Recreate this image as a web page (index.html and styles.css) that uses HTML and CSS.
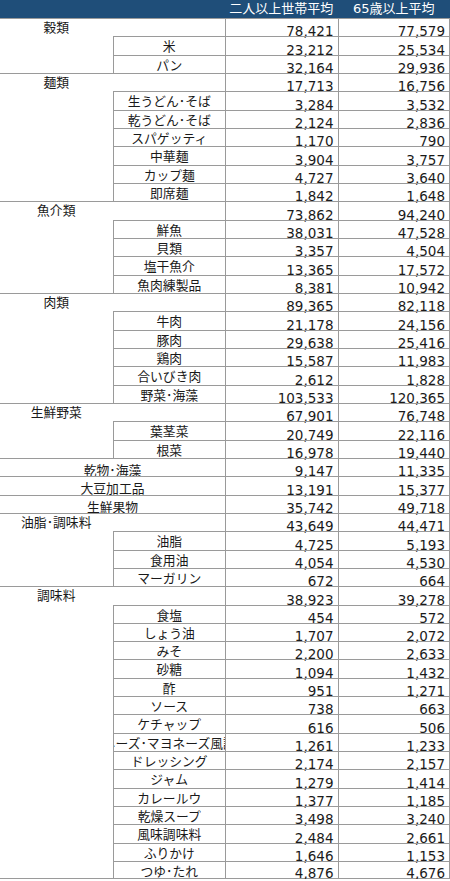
FILE: index.html
```html
<!DOCTYPE html>
<html lang="ja">
<head>
<meta charset="utf-8">
<title>食料支出</title>
<link rel="stylesheet" href="styles.css">
</head>
<body>
<div class="sheet">
  <div class="hd"></div><div class="hd"></div><div class="hd htxt">二人以上世帯平均</div><div class="hd htxt">65歳以上平均</div>

  <div class="cat">穀類</div><div class="catb"></div><div class="num">78,421</div><div class="num r">77,579</div>
  <div class="emp"></div><div class="sub">米</div><div class="num">23,212</div><div class="num r">25,534</div>
  <div class="emp"></div><div class="sub">パン</div><div class="num">32,164</div><div class="num r">29,936</div>

  <div class="cat">麺類</div><div class="catb"></div><div class="num">17,713</div><div class="num r">16,756</div>
  <div class="emp"></div><div class="sub">生うどん･そば</div><div class="num">3,284</div><div class="num r">3,532</div>
  <div class="emp"></div><div class="sub">乾うどん･そば</div><div class="num">2,124</div><div class="num r">2,836</div>
  <div class="emp"></div><div class="sub">スパゲッティ</div><div class="num">1,170</div><div class="num r">790</div>
  <div class="emp"></div><div class="sub">中華麺</div><div class="num">3,904</div><div class="num r">3,757</div>
  <div class="emp"></div><div class="sub">カップ麺</div><div class="num">4,727</div><div class="num r">3,640</div>
  <div class="emp"></div><div class="sub">即席麺</div><div class="num">1,842</div><div class="num r">1,648</div>

  <div class="cat">魚介類</div><div class="catb"></div><div class="num">73,862</div><div class="num r">94,240</div>
  <div class="emp"></div><div class="sub">鮮魚</div><div class="num">38,031</div><div class="num r">47,528</div>
  <div class="emp"></div><div class="sub">貝類</div><div class="num">3,357</div><div class="num r">4,504</div>
  <div class="emp"></div><div class="sub">塩干魚介</div><div class="num">13,365</div><div class="num r">17,572</div>
  <div class="emp"></div><div class="sub">魚肉練製品</div><div class="num">8,381</div><div class="num r">10,942</div>

  <div class="cat">肉類</div><div class="catb"></div><div class="num">89,365</div><div class="num r">82,118</div>
  <div class="emp"></div><div class="sub">牛肉</div><div class="num">21,178</div><div class="num r">24,156</div>
  <div class="emp"></div><div class="sub">豚肉</div><div class="num">29,638</div><div class="num r">25,416</div>
  <div class="emp"></div><div class="sub">鶏肉</div><div class="num">15,587</div><div class="num r">11,983</div>
  <div class="emp"></div><div class="sub">合いびき肉</div><div class="num">2,612</div><div class="num r">1,828</div>
  <div class="emp"></div><div class="sub">野菜･海藻</div><div class="num">103,533</div><div class="num r">120,365</div>

  <div class="cat">生鮮野菜</div><div class="catb"></div><div class="num">67,901</div><div class="num r">76,748</div>
  <div class="emp"></div><div class="sub">葉茎菜</div><div class="num">20,749</div><div class="num r">22,116</div>
  <div class="emp"></div><div class="sub">根菜</div><div class="num">16,978</div><div class="num r">19,440</div>

  <div class="solo">乾物･海藻</div><div class="num">9,147</div><div class="num r">11,335</div>
  <div class="solo">大豆加工品</div><div class="num">13,191</div><div class="num r">15,377</div>
  <div class="solo">生鮮果物</div><div class="num">35,742</div><div class="num r">49,718</div>

  <div class="cat">油脂･調味料</div><div class="catb"></div><div class="num">43,649</div><div class="num r">44,471</div>
  <div class="emp"></div><div class="sub">油脂</div><div class="num">4,725</div><div class="num r">5,193</div>
  <div class="emp"></div><div class="sub">食用油</div><div class="num">4,054</div><div class="num r">4,530</div>
  <div class="emp"></div><div class="sub">マーガリン</div><div class="num">672</div><div class="num r">664</div>

  <div class="cat">調味料</div><div class="catb"></div><div class="num">38,923</div><div class="num r">39,278</div>
  <div class="emp"></div><div class="sub">食塩</div><div class="num">454</div><div class="num r">572</div>
  <div class="emp"></div><div class="sub">しょう油</div><div class="num">1,707</div><div class="num r">2,072</div>
  <div class="emp"></div><div class="sub">みそ</div><div class="num">2,200</div><div class="num r">2,633</div>
  <div class="emp"></div><div class="sub">砂糖</div><div class="num">1,094</div><div class="num r">1,432</div>
  <div class="emp"></div><div class="sub">酢</div><div class="num">951</div><div class="num r">1,271</div>
  <div class="emp"></div><div class="sub">ソース</div><div class="num">738</div><div class="num r">663</div>
  <div class="emp"></div><div class="sub">ケチャップ</div><div class="num">616</div><div class="num r">506</div>
  <div class="emp"></div><div class="sub clip"><span>マヨネーズ･マヨネーズ風調味料</span></div><div class="num">1,261</div><div class="num r">1,233</div>
  <div class="emp"></div><div class="sub">ドレッシング</div><div class="num">2,174</div><div class="num r">2,157</div>
  <div class="emp"></div><div class="sub">ジャム</div><div class="num">1,279</div><div class="num r">1,414</div>
  <div class="emp"></div><div class="sub">カレールウ</div><div class="num">1,377</div><div class="num r">1,185</div>
  <div class="emp"></div><div class="sub">乾燥スープ</div><div class="num">3,498</div><div class="num r">3,240</div>
  <div class="emp"></div><div class="sub">風味調味料</div><div class="num">2,484</div><div class="num r">2,661</div>
  <div class="emp"></div><div class="sub">ふりかけ</div><div class="num">1,646</div><div class="num r">1,153</div>
  <div class="emp end"></div><div class="sub end">つゆ･たれ</div><div class="num end">4,876</div><div class="num r end">4,676</div>
</div>
</body>
</html>
```

FILE: styles.css
```css
html, body {
  margin: 0;
  padding: 0;
  background: #ffffff;
}

.sheet {
  display: grid;
  grid-template-columns: 112.5px 112.5px 112.5px 112.5px;
  grid-template-rows: 18px;
  grid-auto-rows: 18.33px;
  width: 450px;
  color: #1a1a1a;
  font-family: "Noto Sans CJK JP", sans-serif;
  font-size: 12.8px;
}

.sheet > div {
  box-sizing: border-box;
  min-width: 0;
}

.hd {
  background: #1f4e79;
  color: #ffffff;
}

.htxt {
  font-family: "DejaVu Sans", "Noto Sans CJK JP", sans-serif;
  font-size: 13px;
  line-height: 18px;
  text-align: center;
  white-space: nowrap;
  overflow: hidden;
}

.cat {
  border-top: 1px solid #9a9a9a;
  text-align: center;
  line-height: 16px;
  white-space: nowrap;
}

.catb {
  border-top: 1px solid #9a9a9a;
}

.sub {
  border-top: 1px solid #9a9a9a;
  border-left: 1px solid #9a9a9a;
  text-align: center;
  line-height: 17.33px;
  white-space: nowrap;
}

.clip {
  display: flex;
  justify-content: center;
  overflow: hidden;
}

.clip span {
  flex: none;
}

.solo {
  grid-column: span 2;
  border-top: 1px solid #9a9a9a;
  text-align: center;
  line-height: 17.33px;
  padding-top: 2px;
  white-space: nowrap;
}

.num {
  border-top: 1px solid #9a9a9a;
  border-left: 1px solid #9a9a9a;
  display: flex;
  justify-content: flex-end;
  align-items: flex-end;
  padding-right: 4px;
  font-family: "DejaVu Sans", sans-serif;
  font-size: 13.5px;
  line-height: 10px;
}

.num.r {
  border-right: 1px solid #9a9a9a;
}

.end {
  border-bottom: 1px solid #9a9a9a;
}
```
